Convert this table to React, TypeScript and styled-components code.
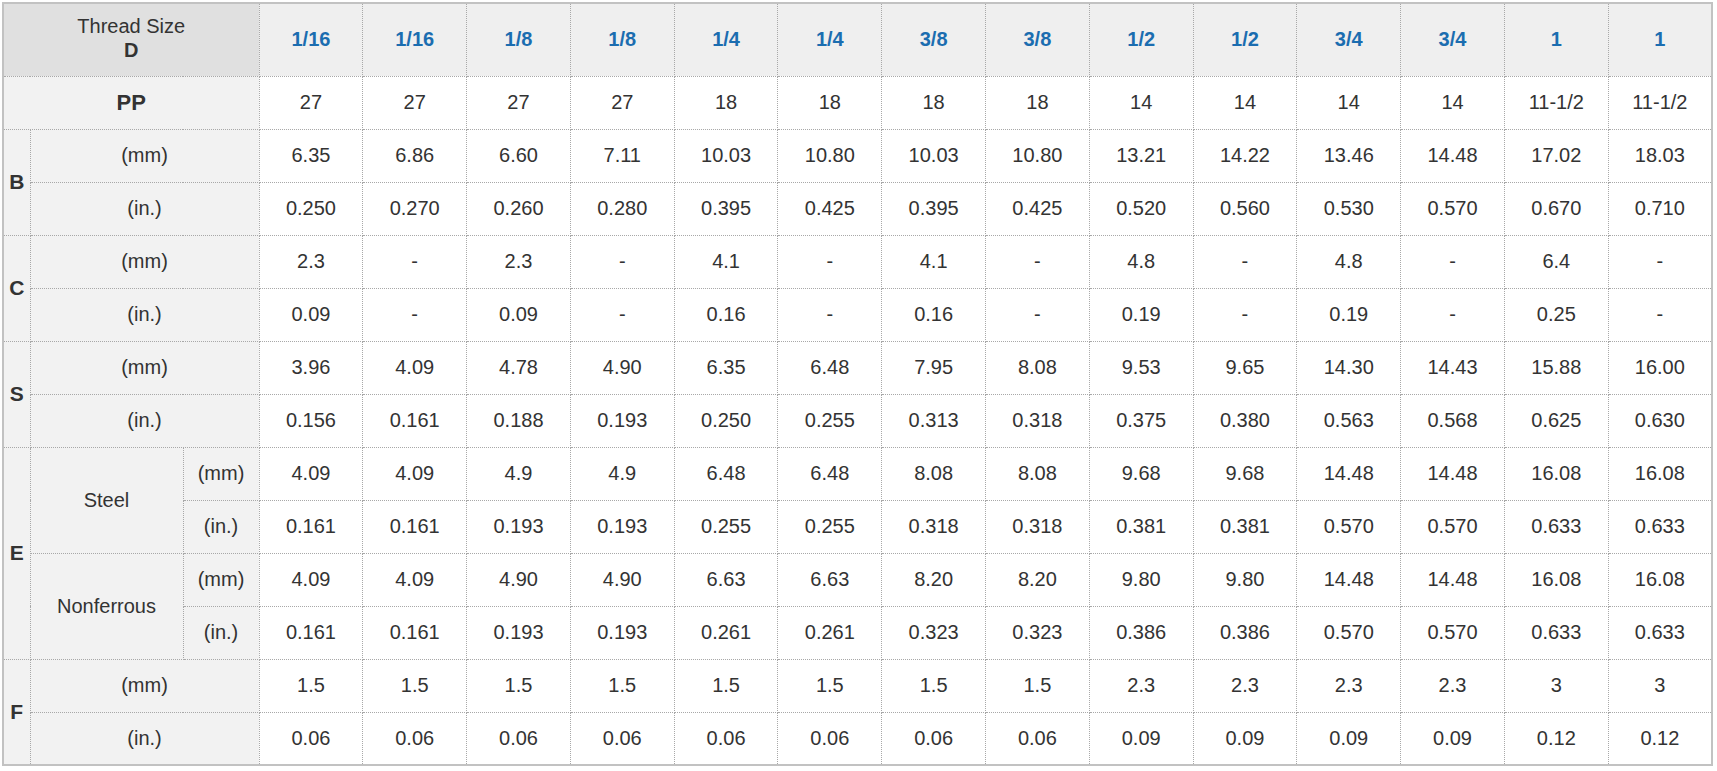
import React from "react";
import styled, { createGlobalStyle } from "styled-components";

const GlobalStyle = createGlobalStyle`
    html, body {
        margin: 0;
        padding: 0;
        background: #ffffff;
    }
    body {
        font-family: "Liberation Sans", Arial, sans-serif;
        color: #333333;
    }
`;

const Page = styled.div`
    padding: 2px 0 0 2px;
`;

const Table = styled.table`
    width: 1711px;
    border-collapse: collapse;
    table-layout: fixed;
    border: 2px solid #c2c2c2;
    font-size: 20px;
    color: #333333;
`;

const Row = styled.tr<{ $head?: boolean }>`
    height: ${(p) => (p.$head ? "73px" : "53px")};
`;

const Cell = styled.td`
    border: 1px dotted #a8a8a8;
    text-align: center;
    vertical-align: middle;
    padding: 0;
    background: #ffffff;
`;

const HeadCell = styled(Cell)`
    background: #efefef;
    color: #1b6db0;
    font-weight: bold;
`;

const CornerCell = styled(Cell)`
    background: #e0e0e0;
    line-height: 24px;
    padding-bottom: 4px;
    b {
        display: block;
    }
`;

const LabelCell = styled(Cell)<{ $bold?: boolean }>`
    background: #f2f2f2;
    font-weight: ${(p) => (p.$bold ? "bold" : "normal")};
    font-size: ${(p) => (p.$bold ? "21px" : "20px")};
`;

const PPCell = styled(LabelCell)`
    font-size: 22px;
`;

const sizes = ["1/16", "1/16", "1/8", "1/8", "1/4", "1/4", "3/8", "3/8", "1/2", "1/2", "3/4", "3/4", "1", "1"];
const pp = ["27", "27", "27", "27", "18", "18", "18", "18", "14", "14", "14", "14", "11-1/2", "11-1/2"];

const data = {
    bMm: "6.35 6.86 6.60 7.11 10.03 10.80 10.03 10.80 13.21 14.22 13.46 14.48 17.02 18.03",
    bIn: "0.250 0.270 0.260 0.280 0.395 0.425 0.395 0.425 0.520 0.560 0.530 0.570 0.670 0.710",
    cMm: "2.3 - 2.3 - 4.1 - 4.1 - 4.8 - 4.8 - 6.4 -",
    cIn: "0.09 - 0.09 - 0.16 - 0.16 - 0.19 - 0.19 - 0.25 -",
    sMm: "3.96 4.09 4.78 4.90 6.35 6.48 7.95 8.08 9.53 9.65 14.30 14.43 15.88 16.00",
    sIn: "0.156 0.161 0.188 0.193 0.250 0.255 0.313 0.318 0.375 0.380 0.563 0.568 0.625 0.630",
    esMm: "4.09 4.09 4.9 4.9 6.48 6.48 8.08 8.08 9.68 9.68 14.48 14.48 16.08 16.08",
    esIn: "0.161 0.161 0.193 0.193 0.255 0.255 0.318 0.318 0.381 0.381 0.570 0.570 0.633 0.633",
    enMm: "4.09 4.09 4.90 4.90 6.63 6.63 8.20 8.20 9.80 9.80 14.48 14.48 16.08 16.08",
    enIn: "0.161 0.161 0.193 0.193 0.261 0.261 0.323 0.323 0.386 0.386 0.570 0.570 0.633 0.633",
    fMm: "1.5 1.5 1.5 1.5 1.5 1.5 1.5 1.5 2.3 2.3 2.3 2.3 3 3",
    fIn: "0.06 0.06 0.06 0.06 0.06 0.06 0.06 0.06 0.09 0.09 0.09 0.09 0.12 0.12",
};

const Values = ({ list }: { list: string }) => (
    <>
        {list.split(" ").map((v, i) => (
            <Cell key={i}>{v}</Cell>
        ))}
    </>
);

// letter group with two unit rows (B, C, S, F)
const Group = ({ letter, mm, inch }: { letter: string; mm: string; inch: string }) => (
    <>
        <Row>
            <LabelCell $bold rowSpan={2}>{letter}</LabelCell>
            <LabelCell colSpan={2}>(mm)</LabelCell>
            <Values list={mm} />
        </Row>
        <Row>
            <LabelCell colSpan={2}>(in.)</LabelCell>
            <Values list={inch} />
        </Row>
    </>
);

const App = () => {
    return (
        <Page>
            <GlobalStyle />
            <Table>
                <colgroup>
                    <col style={{ width: 27 }} />
                    <col style={{ width: 153 }} />
                    <col style={{ width: 76 }} />
                    {sizes.map((_, i) => (
                        <col key={i} />
                    ))}
                </colgroup>
                <tbody>
                    <Row $head>
                        <CornerCell colSpan={3}>
                            Thread Size
                            <b>D</b>
                        </CornerCell>
                        {sizes.map((s, i) => (
                            <HeadCell key={i}>{s}</HeadCell>
                        ))}
                    </Row>
                    <Row>
                        <PPCell $bold colSpan={3}>PP</PPCell>
                        {pp.map((s, i) => (
                            <Cell key={i}>{s}</Cell>
                        ))}
                    </Row>
                    <Group letter="B" mm={data.bMm} inch={data.bIn} />
                    <Group letter="C" mm={data.cMm} inch={data.cIn} />
                    <Group letter="S" mm={data.sMm} inch={data.sIn} />
                    <Row>
                        <LabelCell $bold rowSpan={4}>E</LabelCell>
                        <LabelCell rowSpan={2}>Steel</LabelCell>
                        <LabelCell>(mm)</LabelCell>
                        <Values list={data.esMm} />
                    </Row>
                    <Row>
                        <LabelCell>(in.)</LabelCell>
                        <Values list={data.esIn} />
                    </Row>
                    <Row>
                        <LabelCell rowSpan={2}>Nonferrous</LabelCell>
                        <LabelCell>(mm)</LabelCell>
                        <Values list={data.enMm} />
                    </Row>
                    <Row>
                        <LabelCell>(in.)</LabelCell>
                        <Values list={data.enIn} />
                    </Row>
                    <Group letter="F" mm={data.fMm} inch={data.fIn} />
                </tbody>
            </Table>
        </Page>
    );
};

export default App;
